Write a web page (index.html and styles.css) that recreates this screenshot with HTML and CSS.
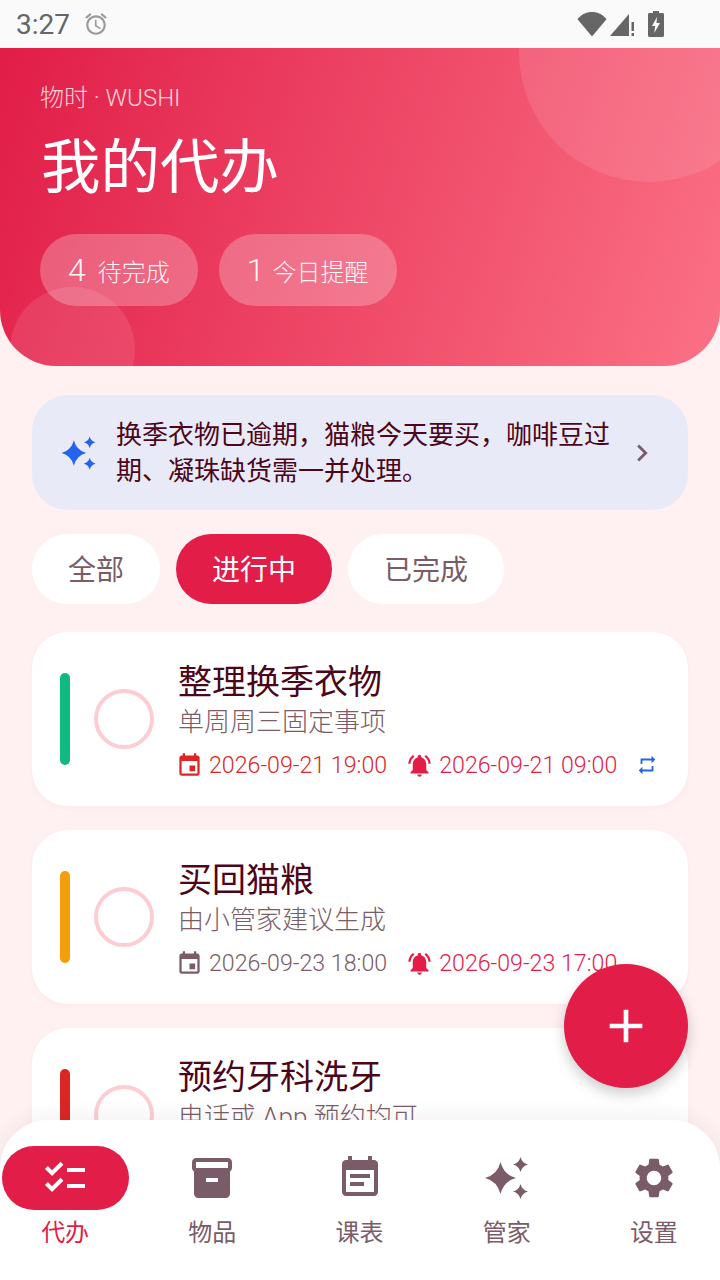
FILE: index.html
```html
<!DOCTYPE html>
<html lang="zh-CN">
<head>
    <meta charset="utf-8">
    <title>物时 - 我的代办</title>
    <link rel="stylesheet" href="styles.css">
</head>
<body>
<div class="app">
    <div class="statusBar">
        <div class="statusLeft">
            <span class="statusTime">3:27</span>
            <svg class="alarmIcon" viewBox="0 0 24 24"><path d="M22 5.720l-4.600-3.860-1.290 1.530 4.600 3.860L22 5.720zM7.880 3.390L6.600 1.860 2 5.710l1.290 1.530 4.590-3.850zM12.500 8H11v6l4.750 2.850.75-1.230-4-2.370V8zM12 4c-4.970 0-9 4.030-9 9s4.030 9 9 9 9-4.030 9-9-4.030-9-9-9zm0 16c-3.870 0-7-3.130-7-7s3.130-7 7-7 7 3.130 7 7-3.130 7-7 7z"/></svg>
        </div>
        <div class="statusRight">
            <svg class="wifiIcon" viewBox="0 0 30 26"><path d="M15 25.500 .5 8.200C4.300 3.500 9.300 1 15 1s10.700 2.500 14.500 7.200z"/></svg>
            <svg class="signalIcon" viewBox="0 0 26 26"><path d="M0 25 19 3v22z"/><path d="M21.500 11h2.500v9h-2.500zM21.500 22h2.500v3h-2.500z"/></svg>
            <svg class="batteryIcon" viewBox="0 0 16 26"><path d="M5 0h6v2h3.500c.8 0 1.500.7 1.500 1.500v21c0 .8-.7 1.500-1.500 1.500h-13C.7 26 0 25.300 0 24.500v-21C0 2.700.7 2 1.500 2H5zM9 6 4 15h3.200l-1 7L12 12H8.500z" fill-rule="evenodd"/></svg>
        </div>
    </div>

    <header class="hero">
        <div class="heroCircleTop"></div>
        <div class="heroCircleBottom"></div>
        <div class="heroBrand">物时 · WUSHI</div>
        <h1 class="heroTitle">我的代办</h1>
        <div class="heroStats">
            <div class="statPill"><span class="statNum">4</span>待完成</div>
            <div class="statPill"><span class="statNum statNumOne">1</span>今日提醒</div>
        </div>
    </header>

    <main class="content">
        <div class="aiBanner">
            <svg class="aiIcon" viewBox="0 0 24 24"><path d="M8.750 4Q10.350 10.400 16.500 12 10.350 13.600 8.750 20 7.150 13.600 1 12 7.150 10.400 8.750 4zM18.750 1.500Q19.500 4.500 22.500 5.250 19.500 6 18.750 9 18 6 15 5.250 18 4.500 18.750 1.500zM18.750 15Q19.500 18 22.500 18.750 19.500 19.500 18.750 22.500 18 19.500 15 18.750 18 18 18.750 15z"/></svg>
            <p class="aiText">换季衣物已逾期，猫粮今天要买，咖啡豆过期、凝珠缺货需一并处理。</p>
            <svg class="aiArrow" viewBox="0 0 24 24"><path d="M10 6 8.590 7.410 13.170 12l-4.580 4.590L10 18l6-6z"/></svg>
        </div>

        <div class="filters">
            <div class="chip">全部</div>
            <div class="chip chipActive">进行中</div>
            <div class="chip">已完成</div>
        </div>

        <div class="taskList">
            <div class="card">
                <div class="bar barGreen"></div>
                <div class="check"></div>
                <div class="cardBody">
                    <div class="cardTitle">整理换季衣物</div>
                    <div class="cardSub">单周周三固定事项</div>
                    <div class="cardMeta">
                        <span class="metaItem metaOverdue">
                            <svg class="metaIcon" viewBox="0 0 24 24"><path d="M17 12h-5v5h5v-5zM16 1v2H8V1H6v2H5c-1.110 0-1.990.9-1.990 2L3 19c0 1.100.89 2 2 2h14c1.100 0 2-.9 2-2V5c0-1.100-.9-2-2-2h-1V1h-2zm3 18H5V8h14v11z"/></svg>
                            2026-09-21 19:00
                        </span>
                        <span class="metaItem metaAlarm">
                            <svg class="metaIcon" viewBox="0 0 24 24"><path d="M7.580 4.080 6.150 2.650C3.750 4.480 2.170 7.300 2.030 10.500h2c.15-2.650 1.510-4.970 3.550-6.420zm12.390 6.420h2c-.15-3.200-1.730-6.020-4.120-7.850l-1.420 1.430c2.020 1.450 3.390 3.770 3.540 6.420zM18 11c0-3.070-1.640-5.640-4.500-6.320V4c0-.83-.67-1.500-1.500-1.500s-1.500.67-1.500 1.500v.68C7.630 5.360 6 7.920 6 11v5l-2 2v1h16v-1l-2-2v-5zm-6 11c.14 0 .27-.01.4-.04.65-.14 1.180-.58 1.440-1.180.1-.24.15-.5.15-.78h-4c.01 1.100.9 2 2.010 2z"/></svg>
                            2026-09-21 09:00
                        </span>
                        <svg class="repeatIcon" viewBox="0 0 24 24"><path d="M7 7h10v3l4-4-4-4v3H5v6h2V7zm10 10H7v-3l-4 4 4 4v-3h12v-6h-2v4z"/></svg>
                    </div>
                </div>
            </div>

            <div class="card">
                <div class="bar barAmber"></div>
                <div class="check"></div>
                <div class="cardBody">
                    <div class="cardTitle">买回猫粮</div>
                    <div class="cardSub">由小管家建议生成</div>
                    <div class="cardMeta">
                        <span class="metaItem metaPlain">
                            <svg class="metaIcon" viewBox="0 0 24 24"><path d="M17 12h-5v5h5v-5zM16 1v2H8V1H6v2H5c-1.110 0-1.990.9-1.990 2L3 19c0 1.100.89 2 2 2h14c1.100 0 2-.9 2-2V5c0-1.100-.9-2-2-2h-1V1h-2zm3 18H5V8h14v11z"/></svg>
                            2026-09-23 18:00
                        </span>
                        <span class="metaItem metaAlarm">
                            <svg class="metaIcon" viewBox="0 0 24 24"><path d="M7.580 4.080 6.150 2.650C3.750 4.480 2.170 7.300 2.030 10.500h2c.15-2.650 1.510-4.970 3.550-6.420zm12.390 6.420h2c-.15-3.200-1.730-6.020-4.120-7.850l-1.420 1.430c2.020 1.450 3.390 3.770 3.540 6.420zM18 11c0-3.070-1.640-5.640-4.500-6.320V4c0-.83-.67-1.500-1.500-1.500s-1.500.67-1.500 1.500v.68C7.630 5.360 6 7.920 6 11v5l-2 2v1h16v-1l-2-2v-5zm-6 11c.14 0 .27-.01.4-.04.65-.14 1.180-.58 1.440-1.180.1-.24.15-.5.15-.78h-4c.01 1.100.9 2 2.010 2z"/></svg>
                            2026-09-23 17:00
                        </span>
                    </div>
                </div>
            </div>

            <div class="card">
                <div class="bar barRed"></div>
                <div class="check"></div>
                <div class="cardBody cardBodyTop">
                    <div class="cardTitle">预约牙科洗牙</div>
                    <div class="cardSub">电话或 App 预约均可</div>
                </div>
            </div>
        </div>
    </main>

    <button class="fab">
        <svg class="fabIcon" viewBox="0 0 24 24"><path d="M19 13h-6v6h-2v-6H5v-2h6V5h2v6h6v2z"/></svg>
    </button>

    <nav class="bottomNav">
        <div class="navItem navActive">
            <div class="navIconWrap">
                <svg class="navIcon" viewBox="0 0 24 24"><path d="M22 7h-9v2h9V7zm0 8h-9v2h9v-2zM5.540 11 2 7.460l1.410-1.410 2.120 2.120 4.240-4.240 1.410 1.410L5.540 11zm0 8L2 15.460l1.410-1.410 2.120 2.120 4.240-4.240 1.410 1.410L5.540 19z"/></svg>
            </div>
            <span class="navLabel">代办</span>
        </div>
        <div class="navItem">
            <div class="navIconWrap">
                <svg class="navIcon" viewBox="0 0 24 24"><path d="M20 2H4c-1 0-2 .9-2 2v3.010c0 .72.43 1.340 1 1.690V20c0 1.100 1.100 2 2 2h14c.9 0 2-.9 2-2V8.700c.57-.35 1-.97 1-1.690V4c0-1.100-1-2-2-2zm-5 12H9v-2h6v2zm5-7H4V4l16-.02V7z"/></svg>
            </div>
            <span class="navLabel">物品</span>
        </div>
        <div class="navItem">
            <div class="navIconWrap">
                <svg class="navIcon" viewBox="0 0 24 24"><path d="M17 10H7v2h10v-2zm2-7h-1V1h-2v2H8V1H6v2H5c-1.110 0-1.990.9-1.990 2L3 19c0 1.100.89 2 2 2h14c1.100 0 2-.9 2-2V5c0-1.100-.9-2-2-2zm0 16H5V8h14v11zm-5-5H7v2h7v-2z"/></svg>
            </div>
            <span class="navLabel">课表</span>
        </div>
        <div class="navItem">
            <div class="navIconWrap">
                <svg class="navIcon" viewBox="0 0 24 24"><path d="M8.750 4Q10.350 10.400 16.500 12 10.350 13.600 8.750 20 7.150 13.600 1 12 7.150 10.400 8.750 4zM18.750 1.500Q19.500 4.500 22.500 5.250 19.500 6 18.750 9 18 6 15 5.250 18 4.500 18.750 1.500zM18.750 15Q19.500 18 22.500 18.750 19.500 19.500 18.750 22.500 18 19.500 15 18.750 18 18 18.750 15z"/></svg>
            </div>
            <span class="navLabel">管家</span>
        </div>
        <div class="navItem">
            <div class="navIconWrap">
                <svg class="navIcon" viewBox="0 0 24 24"><path d="M19.140 12.940c.04-.3.06-.61.06-.94 0-.32-.02-.64-.07-.94l2.030-1.580c.18-.14.23-.41.12-.61l-1.920-3.320c-.12-.22-.37-.29-.59-.22l-2.390.96c-.5-.38-1.030-.7-1.620-.94l-.36-2.540c-.04-.24-.24-.41-.48-.41h-3.840c-.24 0-.43.17-.47.41l-.36 2.540c-.59.24-1.130.57-1.620.94l-2.390-.96c-.22-.08-.47 0-.59.22L2.740 8.870c-.12.21-.08.47.12.61l2.030 1.580c-.05.3-.09.63-.09.94s.02.64.07.94l-2.030 1.580c-.18.14-.23.41-.12.61l1.920 3.320c.12.22.37.29.59.22l2.390-.96c.5.38 1.030.7 1.620.94l.36 2.540c.05.24.24.41.48.41h3.840c.24 0 .44-.17.47-.41l.36-2.540c.59-.24 1.130-.56 1.620-.94l2.390.96c.22.08.47 0 .59-.22l1.920-3.320c.12-.22.07-.47-.12-.61l-2.010-1.580zM12 15.600c-1.980 0-3.600-1.620-3.600-3.600s1.620-3.600 3.600-3.600 3.600 1.620 3.600 3.600-1.620 3.600-3.600 3.600z"/></svg>
            </div>
            <span class="navLabel">设置</span>
        </div>
    </nav>
</div>
</body>
</html>
```

FILE: styles.css
```css
* {
    box-sizing: border-box;
}
body {
    margin: 0;
    background-color: #fff1f2;
    font-family: Roboto, "Noto Sans CJK SC", sans-serif;
    font-weight: 300;
}
.app {
    position: relative;
    width: 720px;
    height: 1280px;
    overflow: hidden;
    display: flex;
    flex-direction: column;
    background-color: #fff1f2;
}

/* status bar */
.statusBar {
    height: 48px;
    flex-shrink: 0;
    padding: 0 56px 0 16px;
    display: flex;
    justify-content: space-between;
    align-items: center;
    background-color: #fafafa;
}
.statusLeft {
    display: flex;
    align-items: center;
    gap: 13px;
}
.statusTime {
    font-size: 28px;
    font-weight: 400;
    color: #666;
}
.alarmIcon {
    width: 26px;
    height: 26px;
    fill: #9a9a9a;
}
.statusRight {
    display: flex;
    align-items: center;
    gap: 3px;
    fill: #666;
}
.wifiIcon {
    width: 30px;
    height: 26px;
}
.signalIcon {
    width: 26px;
    height: 26px;
    margin-right: 9px;
}
.batteryIcon {
    width: 16px;
    height: 26px;
}

/* header */
.hero {
    position: relative;
    height: 318px;
    flex-shrink: 0;
    padding: 34px 40px 0;
    overflow: hidden;
    border-radius: 0 0 56px 56px;
    background: linear-gradient(108deg, #e11d48 0%, #fb7185 100%);
    color: #fff;
}
.heroCircleTop {
    position: absolute;
    top: -126px;
    right: -59px;
    width: 260px;
    height: 260px;
    border-radius: 50%;
    background-color: rgba(255, 255, 255, 0.1);
}
.heroCircleBottom {
    position: absolute;
    top: 239px;
    left: 10px;
    width: 125px;
    height: 125px;
    border-radius: 50%;
    background-color: rgba(255, 255, 255, 0.1);
}
.heroBrand {
    font-size: 24px;
    line-height: 32px;
    color: rgba(255, 255, 255, 0.8);
}
.heroTitle {
    margin: 14px 0 0 1px;
    font-size: 59.500px;
    line-height: 80px;
    font-weight: 400;
}
.heroStats {
    display: flex;
    gap: 21px;
    margin-top: 26px;
}
.statPill {
    height: 72px;
    padding: 0 28px;
    display: flex;
    align-items: center;
    gap: 12px;
    font-size: 24px;
    border-radius: 36px;
    background-color: rgba(255, 255, 255, 0.25);
    color: rgba(255, 255, 255, 0.95);
}
.statNum {
    font-size: 32px;
}
.statNumOne {
    margin-right: -4px;
}

/* main list */
.content {
    flex: 1;
    min-height: 0;
    padding: 29px 32px 0;
}
.aiBanner {
    height: 115px;
    padding: 0 29px 0 28px;
    display: flex;
    align-items: center;
    border-radius: 36px;
    background-color: #e8ebf7;
}
.aiIcon {
    width: 38px;
    height: 38px;
    flex-shrink: 0;
    fill: #2563eb;
}
.aiText {
    flex: 1;
    margin: 0 0 0 18px;
    font-size: 26px;
    line-height: 36px;
    font-weight: 400;
    color: #4c0519;
}
.aiArrow {
    width: 34px;
    height: 34px;
    flex-shrink: 0;
    fill: #7a5c68;
}
.filters {
    display: flex;
    gap: 16px;
    margin-top: 24px;
}
.chip {
    height: 70px;
    padding: 0 36px 2px;
    display: flex;
    align-items: center;
    font-size: 28px;
    font-weight: 400;
    border-radius: 35px;
    background-color: #fff;
    color: #7a5c68;
}
.chipActive {
    background-color: #e11d48;
    color: #fff;
}
.taskList {
    display: flex;
    flex-direction: column;
    gap: 24px;
    margin-top: 28px;
}
.card {
    height: 174px;
    padding-left: 28px;
    display: flex;
    align-items: center;
    border-radius: 36px;
    background-color: #fff;
    box-shadow: 0 2px 8px rgba(225, 29, 72, 0.04);
}
.bar {
    width: 10px;
    height: 92px;
    flex-shrink: 0;
    border-radius: 5px;
}
.barGreen {
    background-color: #10b981;
}
.barAmber {
    background-color: #f59e0b;
}
.barRed {
    background-color: #dc2626;
}
.check {
    width: 60px;
    height: 60px;
    flex-shrink: 0;
    margin: 0 24px 0 24px;
    border: 4px solid #fecdd3;
    border-radius: 50%;
}
.cardBody {
    flex: 1;
    min-width: 0;
}
.cardBodyTop {
    align-self: flex-start;
    padding-top: 26px;
}
.cardTitle {
    font-size: 34px;
    line-height: 46px;
    font-weight: 400;
    color: #4c0519;
}
.cardSub {
    font-size: 26px;
    line-height: 34px;
    color: #7a5c68;
}
.cardMeta {
    display: flex;
    align-items: center;
    margin-top: 12px;
    margin-left: -2px;
    font-size: 23.200px;
    white-space: nowrap;
}
.metaItem {
    display: flex;
    align-items: center;
    gap: 6px;
    margin-right: 19px;
}
.metaIcon {
    width: 27px;
    height: 27px;
    fill: currentColor;
}
.metaOverdue {
    color: #dc2626;
}
.metaAlarm {
    color: #e11d48;
}
.metaPlain {
    color: #7a5c68;
}
.repeatIcon {
    width: 22px;
    height: 22px;
    fill: #2563eb;
}

/* floating button */
.fab {
    position: absolute;
    top: 964px;
    right: 32px;
    width: 124px;
    height: 124px;
    padding: 0;
    display: flex;
    align-items: center;
    justify-content: center;
    border: none;
    border-radius: 50%;
    background-color: #e11d48;
    box-shadow: 0 6px 14px rgba(0, 0, 0, 0.2);
}
.fabIcon {
    width: 56px;
    height: 56px;
    fill: #fff;
}

/* bottom nav */
.bottomNav {
    position: absolute;
    left: 0;
    right: 0;
    bottom: 0;
    height: 160px;
    padding: 26px 1px 0 0;
    display: grid;
    grid-template-columns: repeat(5, 147.200px);
    justify-content: center;
    border-radius: 48px 48px 0 0;
    background-color: #fff;
    box-shadow: 0 -4px 20px rgba(76, 5, 25, 0.06);
}
.navItem {
    display: flex;
    flex-direction: column;
    align-items: center;
    fill: #7a5c68;
    color: #7a5c68;
}
.navIconWrap {
    width: 127px;
    height: 64px;
    display: flex;
    align-items: center;
    justify-content: center;
    border-radius: 32px;
}
.navIcon {
    width: 48px;
    height: 48px;
}
.navLabel {
    margin-top: 6px;
    font-size: 24px;
    line-height: 34px;
    font-weight: 400;
}
.navActive {
    fill: #fff;
    color: #e11d48;
}
.navActive .navIconWrap {
    background-color: #e11d48;
}
```
